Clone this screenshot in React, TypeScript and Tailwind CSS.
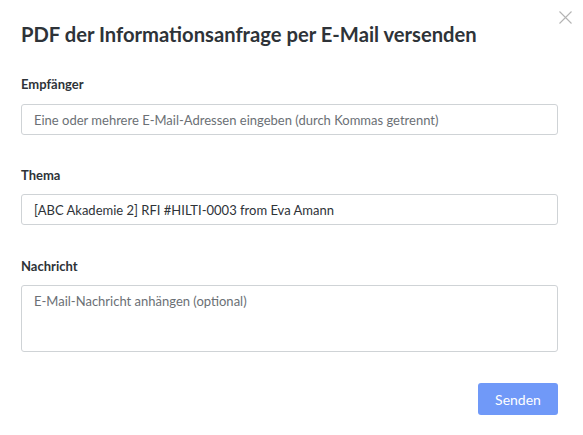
import React from "react";

export default function App() {
  return (
    <div className="relative w-[583px] h-[435px] bg-white" style={{ fontFamily: "Lato, 'Open Sans', sans-serif" }}>
      <button className="absolute left-[559px] top-[11px] w-[13px] h-[13px] text-[#b4b4b4]" aria-label="close">
        <svg width="13" height="13" viewBox="0 0 13 13" fill="none" stroke="currentColor" strokeWidth="1.1">
          <path d="M0.5 0.5 L12.5 12.5 M12.5 0.5 L0.5 12.5" />
        </svg>
      </button>
      <div className="px-[21px] pt-[20px] flex flex-col">
        <h1 className="text-[20.2px] leading-[28px] font-bold text-[#2e3338]">
          PDF der Informationsanfrage per E-Mail versenden
        </h1>
        <label className="mt-[27px] text-[13px] leading-[18px] font-bold text-[#2e3338]">Empfänger</label>
        <input
          className="mt-[11px] h-[31px] w-[537px] border border-[#cfd3d6] rounded-[3px] px-[12px] text-[13px] text-[#333] placeholder:text-[#6b7075] outline-none"
          placeholder="Eine oder mehrere E-Mail-Adressen eingeben (durch Kommas getrennt)"
        />
        <label className="mt-[31px] text-[13px] leading-[18px] font-bold text-[#2e3338]">Thema</label>
        <input
          className="mt-[10px] h-[31px] w-[537px] border border-[#cfd3d6] rounded-[3px] px-[12px] text-[13px] text-[#2e3338] outline-none"
          defaultValue="[ABC Akademie 2] RFI #HILTI-0003 from Eva Amann"
        />
        <label className="mt-[32px] text-[13px] leading-[18px] font-bold text-[#2e3338]">Nachricht</label>
        <textarea
          className="mt-[10px] h-[67px] w-[537px] border border-[#cfd3d6] rounded-[3px] px-[12px] py-[6px] text-[13px] text-[#333] placeholder:text-[#6b7075] outline-none resize-none"
          placeholder="E-Mail-Nachricht anhängen (optional)"
        />
        <div className="flex justify-end w-[537px] mt-[31px]">
          <button className="w-[80px] h-[32px] rounded-[3px] bg-[#7099f8] text-white text-[14px]">Senden</button>
        </div>
      </div>
    </div>
  );
}
